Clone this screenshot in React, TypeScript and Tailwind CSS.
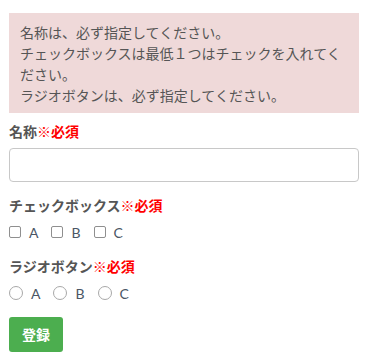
const jp = "font-['Noto_Sans_CJK_JP','Noto_Sans',sans-serif]";

function Required() {
  return <span className="text-[#ff0000]">※必須</span>;
}

function Box({ round }: { round?: boolean }) {
  return (
    <span
      className={
        round
          ? "inline-block w-[14px] h-[14px] rounded-full border border-[#a8a8a8] bg-white"
          : "inline-block w-[12px] h-[12px] rounded-[2px] border border-[#8f8f8f] bg-white"
      }
    />
  );
}

function Choices({ round }: { round?: boolean }) {
  return (
    <div className="flex items-center h-[20px]">
      {["A", "B", "C"].map((v) => (
        <label key={v} className="flex items-center mr-[13px]">
          <Box round={round} />
          <span className="ml-[8px] text-[14px] text-[#4a5665] font-['Lato','Liberation_Sans',sans-serif]">
            {v}
          </span>
        </label>
      ))}
    </div>
  );
}

export default function App() {
  return (
    <div className={`w-[373px] h-[363px] bg-white pl-[9px] pr-[14px] pt-[13px] ${jp} text-[#555]`}>
      <div className="bg-[#efd9d9] pl-[11px] pr-[11px] pt-[9px] pb-[7px] text-[14px] leading-[21px]">
        <p>名称は、必ず指定してください。</p>
        <p>チェックボックスは最低１つはチェックを入れてください。</p>
        <p>ラジオボタンは、必ず指定してください。</p>
      </div>

      <div className="mt-[8px] text-[14px] leading-[21px] font-bold">
        名称<Required />
      </div>
      <input
        type="text"
        className="mt-[6px] block w-full h-[34px] rounded-[4px] border border-[#c8c8c8] bg-white outline-none"
      />

      <div className="mt-[13px] text-[14px] leading-[21px] font-bold">
        チェックボックス<Required />
      </div>
      <div className="mt-[6px]">
        <Choices />
      </div>

      <div className="mt-[14px] text-[14px] leading-[21px] font-bold">
        ラジオボタン<Required />
      </div>
      <div className="mt-[6px]">
        <Choices round />
      </div>

      <button className="mt-[14px] w-[54px] h-[35px] rounded-[3px] bg-[#4cae4f] text-white text-[14px] font-bold">
        登録
      </button>
    </div>
  );
}
